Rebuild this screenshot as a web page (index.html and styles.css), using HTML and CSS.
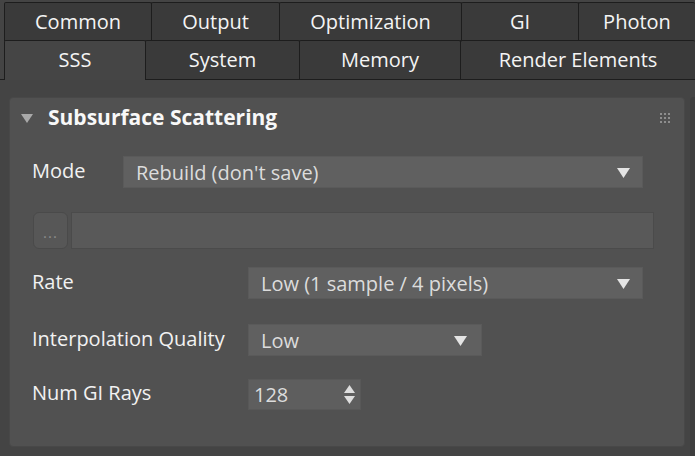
FILE: index.html
```html
<!DOCTYPE html>
<html>
<head>
<meta charset="utf-8">
<link rel="stylesheet" href="styles.css">
</head>
<body>
<div class="tabs">
  <div class="tab-row row1">
    <div class="tab t-common">Common</div>
    <div class="tab t-output">Output</div>
    <div class="tab t-optim">Optimization</div>
    <div class="tab t-gi">GI</div>
    <div class="tab t-photon">Photon</div>
  </div>
  <div class="tab-row row2">
    <div class="tab t-sss active">SSS</div>
    <div class="tab t-system">System</div>
    <div class="tab t-memory">Memory</div>
    <div class="tab t-render">Render Elements</div>
  </div>
</div>
<div class="content">
  <div class="panel">
    <div class="panel-header">
      <svg class="collapse" width="12" height="9" viewBox="0 0 12 9"><polygon points="0,0 12,0 6,9" fill="#a9a9a9"/></svg>
      <span class="title">Subsurface Scattering</span>
      <svg class="grip" width="10" height="10" viewBox="0 0 10 10">
        <g fill="#8e8e8e">
          <rect x="0" y="0" width="2" height="2"/><rect x="4" y="0" width="2" height="2"/><rect x="8" y="0" width="2" height="2"/>
          <rect x="0" y="4" width="2" height="2"/><rect x="4" y="4" width="2" height="2"/><rect x="8" y="4" width="2" height="2"/>
          <rect x="0" y="8" width="2" height="2"/><rect x="4" y="8" width="2" height="2"/><rect x="8" y="8" width="2" height="2"/>
        </g>
      </svg>
    </div>
    <div class="row row-mode">
      <span class="label label-mode">Mode</span>
      <div class="dropdown dd-mode">
        <span class="dd-text">Rebuild (don't save)</span>
        <svg class="dd-arrow" width="13" height="10" viewBox="0 0 13 10"><polygon points="0,0 13,0 6.5,10" fill="#e4e4e4"/></svg>
      </div>
    </div>
    <div class="row row-file">
      <div class="browse-btn"><span class="dots">...</span></div>
      <div class="file-field"></div>
    </div>
    <div class="row row-rate">
      <span class="label label-wide">Rate</span>
      <div class="dropdown dd-rate">
        <span class="dd-text">Low (1 sample / 4 pixels)</span>
        <svg class="dd-arrow" width="13" height="10" viewBox="0 0 13 10"><polygon points="0,0 13,0 6.5,10" fill="#e4e4e4"/></svg>
      </div>
    </div>
    <div class="row row-interp">
      <span class="label label-wide">Interpolation Quality</span>
      <div class="dropdown dd-interp">
        <span class="dd-text">Low</span>
        <svg class="dd-arrow" width="13" height="10" viewBox="0 0 13 10"><polygon points="0,0 13,0 6.5,10" fill="#e4e4e4"/></svg>
      </div>
    </div>
    <div class="row row-rays">
      <span class="label label-wide">Num GI Rays</span>
      <div class="spinner">
        <span class="spin-text">128</span>
        <svg class="spin-arrows" width="11" height="20" viewBox="0 0 11 20"><polygon points="5.5,0 11,8 0,8" fill="#dedede"/><polygon points="0,11 11,11 5.5,19" fill="#dedede"/></svg>
      </div>
    </div>
  </div>
  <div class="side-strip"></div>
</div>
</body>
</html>
```

FILE: styles.css
```css
* { box-sizing: border-box; }
html, body {
  margin: 0;
  padding: 0;
}
body {
  width: 695px;
  height: 456px;
  overflow: hidden;
  background: #444444;
  font-family: "Open Sans", "Noto Sans", sans-serif;
  font-size: 20px;
  color: #f2f2f2;
}
.tabs {
  padding-top: 2px;
}
.tab-row {
  display: flex;
  padding-left: 4px;
}
.row1 {
  height: 39px;
}
.row2 {
  height: 40px;
  margin-top: -1px;
  border-bottom: 1px solid #1d1d1d;
}
.tab {
  flex: none;
  display: flex;
  align-items: center;
  justify-content: center;
  background: #3a3a3a;
  border: 1px solid #1d1d1d;
  border-bottom: none;
  border-radius: 2px 2px 0 0;
  margin-left: -1px;
  color: #f4f4f4;
  line-height: 1;
  padding-bottom: 1px;
}
.tab:first-child { margin-left: 0; }
.tab.active {
  background: #454545;
  height: 40px;
  position: relative;
  z-index: 1;
}
.t-common { width: 148px; }
.t-output { width: 129px; }
.t-optim { width: 183px; }
.t-gi { width: 118px; }
.t-photon { flex: 1; border-right: none; }
.t-sss { width: 142px; }
.t-system { width: 155px; }
.t-memory { width: 162px; }
.t-render { flex: 1; border-right: none; }

.content {
  display: flex;
  padding-top: 17px;
  padding-left: 9px;
}
.panel {
  width: 676px;
  height: 350px;
  background: #515151;
  border: 1px solid #484848;
  border-radius: 4px;
  padding: 0 0 0 22px;
  display: flex;
  flex-direction: column;
}
.side-strip {
  margin-left: 5px;
  flex: 1;
  height: 360px;
  background: #3e3e3e;
  border-radius: 4px 0 0 0;
}
.panel-header {
  height: 39px;
  display: flex;
  align-items: center;
  margin-left: -11px;
}
.collapse {
  margin-top: 2px;
}
.title {
  font-weight: 700;
  font-size: 21px;
  margin-left: 15px;
  color: #f8f8f8;
  margin-top: -1px;
}
.grip {
  margin-left: auto;
  margin-right: 14px;
  margin-top: 1px;
}
.row {
  display: flex;
  align-items: center;
}
.label {
  flex: none;
  color: #f2f2f2;
  margin-top: -4px;
}
.label-mode { width: 91px; }
.label-wide { width: 216px; }
.dropdown {
  display: flex;
  align-items: center;
  height: 32px;
  background: #606060;
  border: 1px solid #5a5a5a;
  padding: 0 12px 0 12px;
}
.dd-text {
  color: #dcdcdc;
  flex: 1;
}
.dd-arrow {
  flex: none;
  margin-top: 1px;
}
.row-mode { margin-top: 19px; }
.dd-mode { width: 520px; }
.row-file { margin-top: 24px; margin-left: 1px; }
.browse-btn {
  width: 35px;
  height: 37px;
  background: #575757;
  border: 1px solid #4a4a4a;
  border-radius: 6px;
  display: flex;
  justify-content: center;
  align-items: flex-end;
}
.dots {
  color: #8c8c8c;
  font-size: 15px;
  line-height: 1;
  padding-bottom: 8px;
  letter-spacing: 1px;
}
.file-field {
  margin-left: 3px;
  width: 583px;
  height: 37px;
  background: #595959;
  border: 1px solid #4b4b4b;
}
.row-rate { margin-top: 18px; }
.dd-rate { width: 395px; }
.row-interp { margin-top: 25px; }
.dd-interp { width: 234px; padding-right: 14px; }
.row-rays { margin-top: 23px; }
.spinner {
  width: 113px;
  height: 31px;
  background: #5e5e5e;
  border: 1px solid #585858;
  display: flex;
  align-items: center;
  padding: 0 5px 0 5px;
}
.spin-text {
  flex: 1;
  color: #dcdcdc;
}
.spin-arrows { flex: none; }
```
